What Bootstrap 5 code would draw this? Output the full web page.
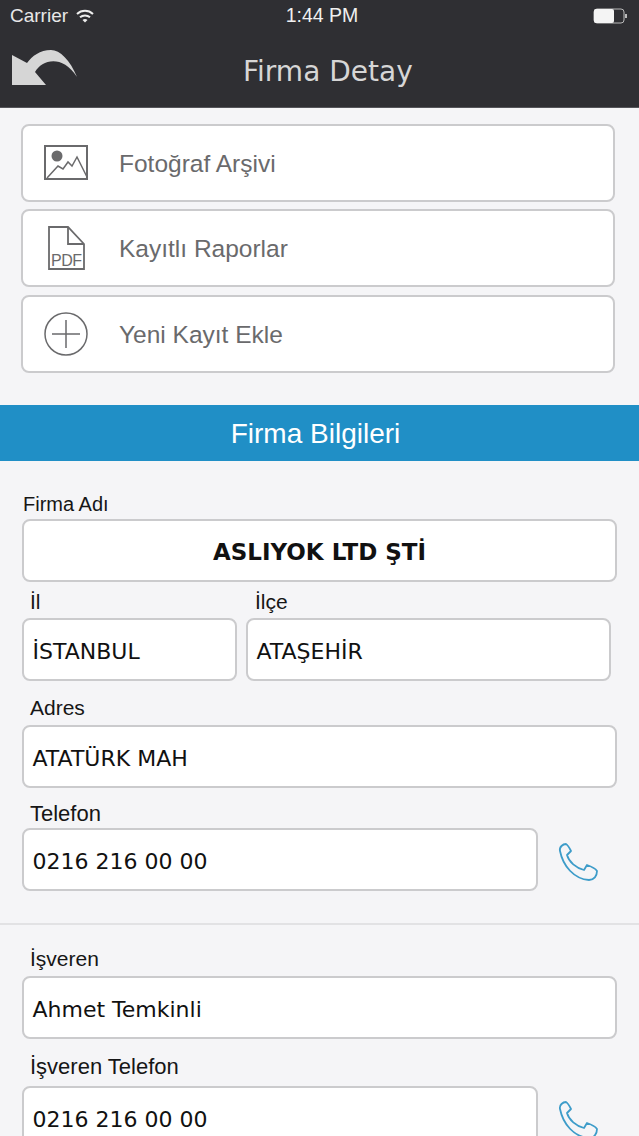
<!DOCTYPE html>
<html lang="tr">
<head>
  <meta charset="UTF-8">
  <meta name="viewport" content="width=device-width, initial-scale=1.0">
  <title>Firma Detay</title>
  <link href="https://cdn.jsdelivr.net/npm/bootstrap@5.3.0/dist/css/bootstrap.min.css" rel="stylesheet">
  <style>
    body {
      background: #f5f5f7;
      font-family: "Liberation Sans", Arial, sans-serif;
      height: 1136px;
      overflow: hidden;
    }
    .app-top {
      background: #2f2f33;
      height: 108px;
      color: #e6e6e6;
      border-bottom: 1px solid #55555a;
    }
    .status-row {
      height: 32px;
      padding: 0 10px;
      font-size: 19px;
      color: #e8e8e8;
    }
    .status-side { width: 120px; }
    .status-time { font-size: 19.5px; color: #f0f0f0; margin-left: 5px; }
    .head-row { height: 75px; padding-left: 12px; }
    .back-icon { margin-top: -3px; }
    .head-title {
      font-family: "DejaVu Sans", sans-serif;
      font-size: 28px;
      color: #d6d6d6;
      margin-left: 165px;
      margin-top: 5px;
    }
    .menu-area { padding: 16px 24px 0 21px; }
    .menu-btn {
      height: 78px;
      background: #fff;
      border: 2px solid #cbcbcd;
      border-radius: 8px;
      margin-bottom: 7px;
      color: #6a6a6c;
      font-size: 24.5px;
    }
    .menu-btn:nth-child(2) { margin-bottom: 8px; }
    .menu-btn span { margin-top: 2px; }
    .menu-icon { width: 96px; flex: 0 0 96px; padding-left: 20.500px; }
    .menu-icon svg { display: block; }
    .section-bar {
      margin-top: 32px;
      height: 56px;
      padding: 2px 8px 0 0;
      background: #208fc6;
      color: #fff;
      font-size: 28px;
    }
    .form-area { padding: 0 22px; }
    .field-label { font-size: 22px; line-height: 24px; color: #161616; }
    .field-box {
      height: 63px;
      background: #fff;
      border: 2px solid #cbcbcd;
      border-radius: 8px;
      padding: 4px 8.500px 0;
      font-family: "DejaVu Sans", sans-serif;
      font-size: 22px;
      color: #111;
    }
    .box-title { font-weight: 700; font-size: 23px; }
    .phone-box { width: 516px; flex: 0 0 516px; }
    .line-sep { border-top: 2px solid #e2e2e4; margin: 32px 0 0; opacity: 1; }
    .label-first { font-size: 20px; margin-top: 31px; margin-bottom: 3px; padding-left: 1px; }
    .label-mid { font-size: 21px; }
    .field-pair { margin-top: 8px; }
    .field-pair .field-label { margin-bottom: 4px; }
    .pair-left { width: 215px; flex: 0 0 215px; }
    .pair-right { width: 365px; flex: 0 0 365px; margin-left: 9px; }
    .pair-right .field-label { padding-left: 9px; }
    .label-adres { margin-top: 15px; margin-bottom: 5px; }
    .label-tel { margin-top: 14px; margin-bottom: 2px; }
    .label-boss { margin-top: 22px; margin-bottom: 5px; }
    .label-tel2 { margin-top: 16px; margin-bottom: 7px; }
    .phone-icon { margin-left: 20px; margin-top: 4px; }
  </style>
</head>
<body>
  <!-- ust bar -->
  <div class="app-top">
    <div class="status-row d-flex align-items-center justify-content-between">
      <div class="status-side d-flex align-items-center gap-2">
        <span>Carrier</span>
        <svg width="18" height="14" viewBox="0 0 18 14" fill="none" stroke="#eee" stroke-width="2">
          <path d="M1 5C5.500 .8 12.500 .8 17 5"/><path d="M4 8.300C6.800 5.800 11.200 5.800 14 8.300"/><path d="M9 13.500L6.500 11C8 9.800 10 9.800 11.500 11Z" fill="#eee" stroke="none"/>
        </svg>
      </div>
      <span class="status-time">1:44 PM</span>
      <div class="status-side d-flex justify-content-end">
        <svg width="36" height="16" viewBox="0 0 36 16">
          <rect x="1" y="1" width="30" height="14" rx="3" fill="none" stroke="#bbb"/>
          <rect x="1" y="1" width="20" height="14" rx="2" fill="#f4f4f4"/>
          <rect x="32" y="6" width="2" height="4" fill="#bbb"/>
        </svg>
      </div>
    </div>
    <div class="head-row d-flex align-items-center">
      <svg class="back-icon" width="66" height="36" viewBox="0 0 66 36">
        <path d="M0 5V35H34L23 22C30 10 50 4 65 27C58 10 48 0 39 0C28 0 20 6 15 13Z" fill="#d6d6d6"/>
      </svg>
      <div class="head-title">Firma Detay</div>
    </div>
  </div>

  <!-- menu butonlari -->
  <div class="menu-area">
    <div class="menu-btn d-flex align-items-center">
      <div class="menu-icon">
        <svg width="44" height="36" viewBox="0 0 44 36" fill="none" stroke="#6a6a6c" stroke-width="2">
          <rect x="1" y="1" width="42" height="33"/>
          <circle cx="13" cy="11" r="5.500" fill="#6a6a6c" stroke="none"/>
          <path stroke-width="1.500" d="M3 33L14 21L19 24L24 17L28 21L33 12L43 32"/>
        </svg>
      </div>
      <span>Fotoğraf Arşivi</span>
    </div>
    <div class="menu-btn d-flex align-items-center">
      <div class="menu-icon">
        <svg width="44" height="45" viewBox="0 0 44 45" fill="none" stroke="#6a6a6c" stroke-width="1.800">
          <path d="M5 1H24L40 18V43H5Z"/>
          <path d="M24 1V18H40"/>
          <text x="7" y="40" font-family="Liberation Sans, sans-serif" font-size="16" textLength="31" fill="#6a6a6c" stroke="none">PDF</text>
        </svg>
      </div>
      <span>Kayıtlı Raporlar</span>
    </div>
    <div class="menu-btn d-flex align-items-center">
      <div class="menu-icon">
        <svg width="44" height="44" viewBox="0 0 44 44" fill="none" stroke="#6a6a6c" stroke-width="1.500">
          <circle cx="22" cy="22" r="21"/>
          <path d="M22 8V36M8 22H36"/>
        </svg>
      </div>
      <span>Yeni Kayıt Ekle</span>
    </div>
  </div>

  <div class="section-bar d-flex align-items-center justify-content-center">Firma Bilgileri</div>

  <!-- firma formu -->
  <div class="form-area">
    <div class="field-label label-first">Firma Adı</div>
    <div class="field-box box-title d-flex align-items-center justify-content-center">ASLIYOK LTD ŞTİ</div>

    <div class="d-flex field-pair">
      <div class="pair-left">
        <div class="field-label label-mid ps-2">İl</div>
        <div class="field-box d-flex align-items-center">İSTANBUL</div>
      </div>
      <div class="pair-right">
        <div class="field-label label-mid">İlçe</div>
        <div class="field-box d-flex align-items-center">ATAŞEHİR</div>
      </div>
    </div>

    <div class="field-label label-mid ps-2 label-adres">Adres</div>
    <div class="field-box d-flex align-items-center">ATATÜRK MAH</div>

    <div class="field-label ps-2 label-tel">Telefon</div>
    <div class="d-flex align-items-center">
      <div class="field-box phone-box d-flex align-items-center">0216 216 00 00</div>
      <svg class="phone-icon" width="40" height="38" viewBox="0 0 40 38" fill="none" stroke="#3d9cc9" stroke-width="1.800" stroke-linejoin="round">
        <path d="M2 8C1 4 5 1 8 1C10 2 12 6 13 8L9 12C11 19 18 25 26 27L29 22C32 23 37 25 39 28C39 33 36 37 31 37C16 36 5 23 2 8Z"/>
      </svg>
    </div>
  </div>

  <hr class="line-sep">

  <div class="form-area">
    <div class="field-label label-mid ps-2 label-boss">İşveren</div>
    <div class="field-box d-flex align-items-center">Ahmet Temkinli</div>

    <div class="field-label ps-2 label-tel2">İşveren Telefon</div>
    <div class="d-flex align-items-center">
      <div class="field-box phone-box d-flex align-items-center">0216 216 00 00</div>
      <svg class="phone-icon" width="40" height="38" viewBox="0 0 40 38" fill="none" stroke="#3d9cc9" stroke-width="1.800" stroke-linejoin="round">
        <path d="M2 8C1 4 5 1 8 1C10 2 12 6 13 8L9 12C11 19 18 25 26 27L29 22C32 23 37 25 39 28C39 33 36 37 31 37C16 36 5 23 2 8Z"/>
      </svg>
    </div>
  </div>

  <script src="https://cdn.jsdelivr.net/npm/bootstrap@5.3.0/dist/js/bootstrap.bundle.min.js"></script>
</body>
</html>
